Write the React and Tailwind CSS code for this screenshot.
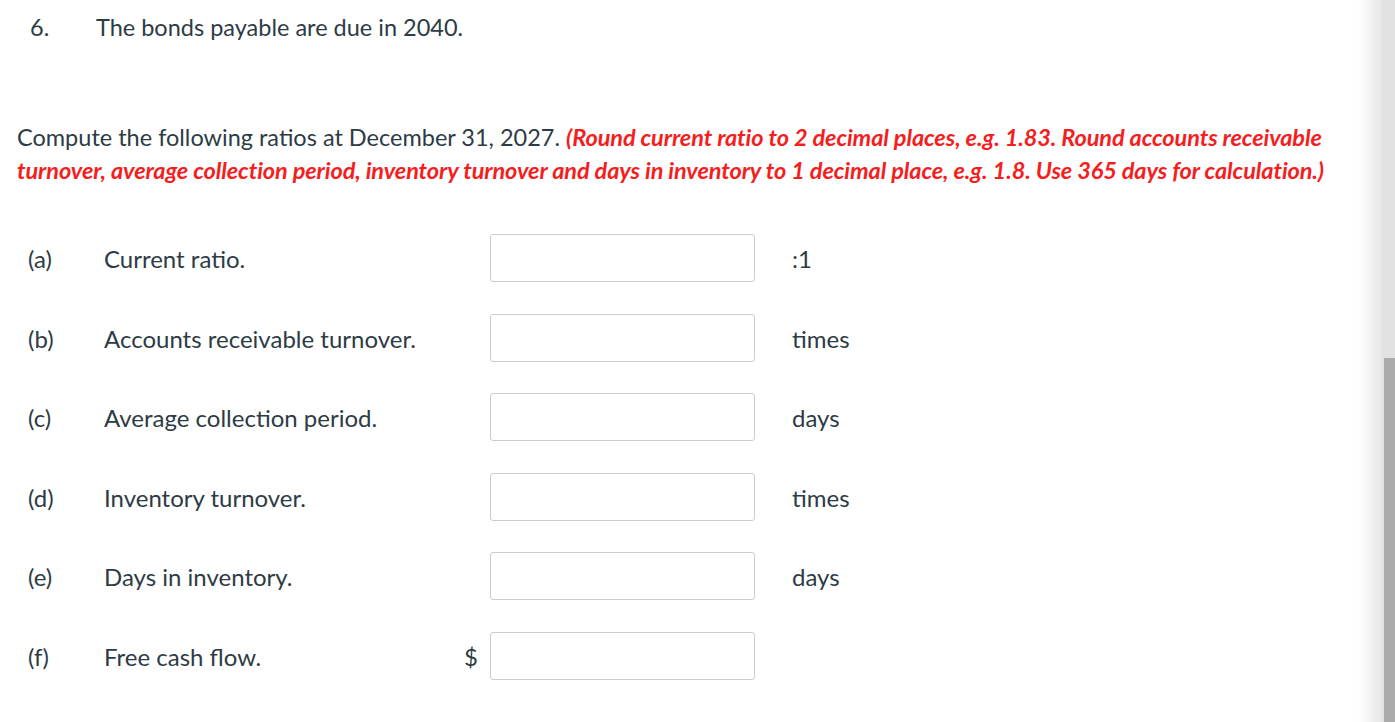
import React from "react";

const rows = [
  { key: "(a)", label: "Current ratio.", unit: ":1" },
  { key: "(b)", label: "Accounts receivable turnover.", unit: "times" },
  { key: "(c)", label: "Average collection period.", unit: "days" },
  { key: "(d)", label: "Inventory turnover.", unit: "times" },
  { key: "(e)", label: "Days in inventory.", unit: "days" },
  { key: "(f)", label: "Free cash flow.", unit: "", prefix: "$" },
];

const App = () => {
  return (
    <div
      className="flex h-[722px] w-full overflow-hidden bg-white text-[#2d3b45]"
      style={{ fontFamily: "Lato, 'Open Sans', sans-serif" }}
    >
      <main className="flex-1">
        <div className="flex pt-[12px] text-[23.5px] leading-[30px]">
          <span className="w-[96px] pl-[30px]">6.</span>
          <span>The bonds payable are due in 2040.</span>
        </div>

        <p className="mt-[79px] pl-[17px] pr-[30px] text-[23.5px] leading-[33px]">
          Compute the following ratios at December 31, 2027.{" "}
          <span className="font-bold italic text-[#f51e1e] tracking-[-0.1px]">
            (Round current ratio to 2 decimal places, e.g. 1.83. Round accounts
            receivable turnover, average collection period, inventory turnover
            and days in inventory to 1 decimal place, e.g. 1.8. Use 365 days for
            calculation.)
          </span>
        </p>

        <div className="mt-[47px] flex flex-col gap-[31.6px] text-[24px]">
          {rows.map((row) => (
            <div key={row.key} className="flex h-[48px] items-center">
              <span className="w-[104px] pl-[28px] pt-[2px]">{row.key}</span>
              <span className="flex w-[386px] items-center justify-between pr-[12px] pt-[2px]">
                <span>{row.label}</span>
                {row.prefix && <span>{row.prefix}</span>}
              </span>
              <input
                type="text"
                className="h-[48px] w-[265px] rounded-[3px] border border-[#cccccc] bg-white px-2 outline-none"
              />
              <span className="pl-[37px] pt-[2px]">{row.unit}</span>
            </div>
          ))}
        </div>
      </main>

      <div className="w-[24px] bg-gradient-to-r from-white to-[#e6e6e6]" />
      <div className="flex w-[13px] flex-col bg-[#e2e2e2]">
        <div className="h-[358px]" />
        <div className="ml-[2px] flex-1 bg-[#ababab]" />
      </div>
    </div>
  );
};

export default App;
